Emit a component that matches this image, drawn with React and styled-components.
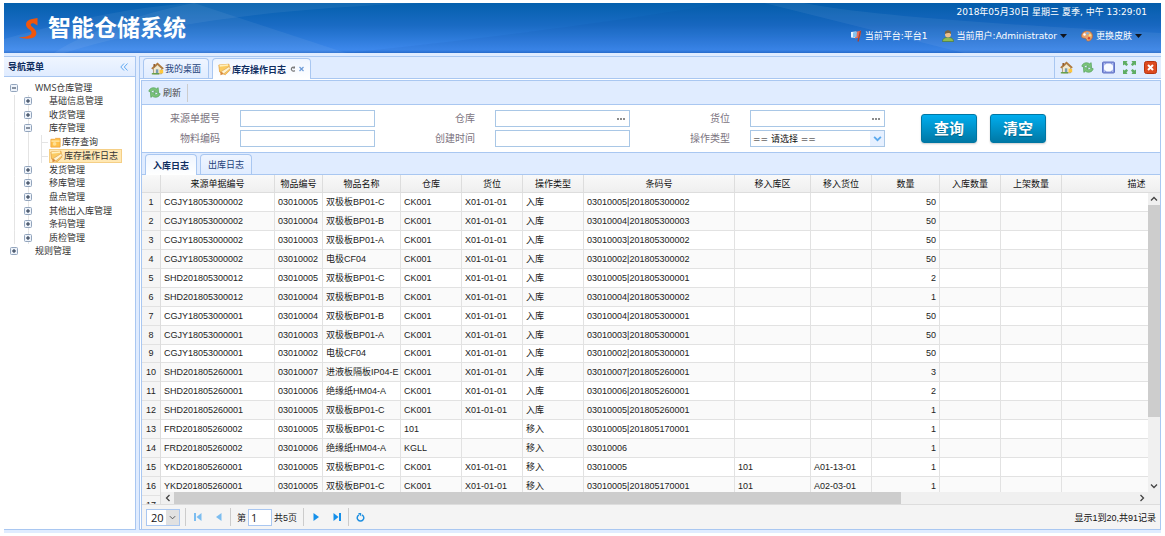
import React, { useState } from 'react';
import styled, { createGlobalStyle, css } from 'styled-components';

const GlobalStyle = createGlobalStyle`
  * {
    box-sizing: border-box;
  }

  body {
    margin: 0;
    background: #fff;
    color: #222;
    font-family: "Liberation Sans", "Noto Sans CJK SC", sans-serif;
    font-size: 9px;
  }

  button, input, select {
    font-family: inherit;
    font-size: inherit;
    color: inherit;
    margin: 0;
    padding: 0;
  }

  ul {
    list-style: none;
    margin: 0;
    padding: 0;
  }

  a {
    color: inherit;
    text-decoration: none;
  }
`;

const BORDER = '#a9c7f1';
const PANEL = '#e0ecff';

const Page = styled.div`
  height: 100vh;
  min-height: 400px;
  display: flex;
  flex-direction: column;
  padding: 3px 4px;
`;

const Header = styled.header`
  position: relative;
  display: flex;
  justify-content: space-between;
  height: 50px;
  flex: none;
  overflow: hidden;
  color: #fff;
  background: linear-gradient(#0460ad, #1a6bc4 45%, #3d88ec 94%, #2a6fd0);
`;

const Rays = styled.svg`
  position: absolute;
  inset: 0;
  width: 100%;
  height: 100%;
`;

const Brand = styled.div`
  position: relative;
  display: flex;
  align-items: center;
  gap: 10px;
  padding-left: 15px;
`;

const Title = styled.h1`
  margin: 0;
  font-size: 23px;
  line-height: 50px;
  font-weight: bold;
`;

const HeaderInfo = styled.div`
  position: relative;
  display: flex;
  flex-direction: column;
  align-items: flex-end;
  padding: 3px 14px 0 0;
  font-family: "DejaVu Sans", "Noto Sans CJK SC", sans-serif;
  line-height: 12px;
`;

const HeaderMenu = styled.nav`
  display: flex;
  align-items: center;
  gap: 14px;
  margin: 12px 5px 0 0;
`;

const HeaderItem = styled.a`
  display: flex;
  align-items: center;
  gap: 3px;
`;

const Layout = styled.div`
  flex: 1;
  min-height: 0;
  display: flex;
  gap: 3px;
  padding: 3px 0;
  background: ${PANEL};
`;

const Sidebar = styled.aside`
  width: 132px;
  flex: none;
  background: #fff;
  border: 1px solid ${BORDER};
  border-left: 0;
`;

const SidebarHead = styled.div`
  display: flex;
  align-items: center;
  justify-content: space-between;
  height: 20px;
  padding: 0 4px;
  color: #0e2d5f;
  font-weight: bold;
  background: linear-gradient(#eff5ff, #e0ecff);
  border-bottom: 1px solid ${BORDER};
`;

const Tree = styled.ul`
  display: grid;
  grid-auto-rows: 1fr;
  height: 177px;
  margin-top: 4px;
  font-family: "Open Sans", "Noto Sans CJK SC", sans-serif;
  color: #333;
`;

const guide = (x, w, h) => `linear-gradient(#e4e4e4, #e4e4e4) ${x}px center / ${w} ${h} no-repeat`;

const TreeRow = styled.li`
  display: flex;
  align-items: center;
  padding-left: ${p => p.$level === 0 ? 5 : 19}px;
  white-space: nowrap;
  ${p => p.$level === 1 && css`
    background: ${guide(10, '1px', '100%')}, ${guide(24, '1px', '100%')};
  `}
  ${p => p.$level === 2 && css`
    background: ${guide(10, '1px', '100%')}, ${guide(24, '1px', '100%')}, ${guide(37, '1px', '100%')}, ${guide(37, '7px', '1px')};
  `}
`;

const Branch = styled.button`
  display: flex;
  align-items: center;
  gap: 16px;
  border: 0;
  background: none;
  line-height: 12px;
`;

const Leaf = styled.a`
  display: flex;
  align-items: center;
  gap: 1px;
  height: 14px;
  margin-left: 26px;
  padding: 0 3px 0 0;
  line-height: 12px;
  border: 1px solid transparent;
  ${p => p.$active && css`
    background: #ffe8b4;
    border-color: #f5cf86;
  `}
`;

const Main = styled.main`
  flex: 1;
  min-width: 0;
  display: flex;
  flex-direction: column;
  background: #fff;
  border: 1px solid ${BORDER};
  border-right: 0;
`;

const TabStrip = styled.div`
  display: flex;
  align-items: flex-end;
  gap: 3px;
  flex: none;
  height: 22px;
  padding-left: 3px;
  background: ${PANEL};
  border-bottom: 1px solid ${BORDER};
`;

const Tab = styled.button`
  display: flex;
  align-items: center;
  justify-content: center;
  gap: 1px;
  height: 20px;
  padding: 0 7px;
  color: #24427a;
  white-space: nowrap;
  background: linear-gradient(#eff5ff, #e0ecff);
  border: 1px solid ${BORDER};
  border-bottom: 0;
  border-radius: 4px 4px 0 0;
  ${p => p.$active && css`
    color: #0e2d5f;
    font-weight: bold;
    height: 21px;
    margin-bottom: -1px;
    padding: 0 ${p.$tight ? 5 : 7}px;
    background: linear-gradient(#eff5ff, #fff);
  `}
`;

const StripTools = styled.div`
  display: flex;
  align-items: center;
  align-self: stretch;
  gap: 7px;
  margin-left: auto;
  padding: 0 4px;
  border-left: 1px solid ${BORDER};
`;

const IconButton = styled.button`
  display: flex;
  align-items: center;
  justify-content: center;
  width: 14px;
  height: 14px;
  border: 0;
  background: none;
`;

const Content = styled.div`
  flex: 1;
  min-height: 0;
  display: flex;
  flex-direction: column;
  margin: 1px 0 0 1px;
  border: 1px solid ${BORDER};
  border-bottom: 0;
`;

const Toolbar = styled.div`
  display: flex;
  align-items: center;
  flex: none;
  height: 24px;
  padding-left: 6px;
  background: ${PANEL};
  border-bottom: 1px solid ${BORDER};
`;

const ToolButton = styled.button`
  display: flex;
  align-items: center;
  gap: 2px;
  height: 18px;
  padding-right: 6px;
  border: 0;
  border-right: 1px solid #ccc;
  background: none;
  color: #444;
`;

const SearchForm = styled.form`
  display: flex;
  align-items: center;
  gap: 36px;
  flex: none;
  height: 48px;
  border-bottom: 1px solid ${BORDER};
`;

const Fields = styled.div`
  display: grid;
  grid-template-columns: 78px 135px 80px 135px 80px 135px;
  column-gap: 20px;
  row-gap: 3px;
`;

const Label = styled.label`
  font-size: 10px;
  line-height: 17px;
  text-align: right;
  color: #7b7380;
`;

const Field = styled.div`
  position: relative;
  display: flex;
  height: 17px;
  border: 1px solid #a9c7e6;
  background: #fff;
  font-family: "DejaVu Sans", "Noto Sans CJK SC", sans-serif;
`;

const TextInput = styled.input`
  flex: 1;
  min-width: 0;
  padding: 0 3px;
  border: 0;
  outline: 0;
  background: none;
`;

const Select = styled.select`
  flex: 1;
  min-width: 0;
  padding: 0 2px;
  border: 0;
  appearance: none;
  background: none;
  color: #111;
`;

const Arrow = styled.span`
  position: absolute;
  top: 0;
  right: 0;
  bottom: 0;
  width: ${p => p.$width}px;
  display: flex;
  align-items: center;
  justify-content: center;
  background: ${p => p.$fill};
  pointer-events: none;
`;

const PickButton = styled.button`
  display: flex;
  align-items: center;
  justify-content: center;
  width: 16px;
  border: 0;
  background: none;
`;

const Actions = styled.div`
  display: flex;
  gap: 13px;
`;

const ActionButton = styled.button`
  width: 56px;
  height: 29px;
  color: #fff;
  font-size: 15px;
  font-weight: bold;
  line-height: 20px;
  text-shadow: 0 1px 1px rgba(0, 0, 0, 0.3);
  background: linear-gradient(#00adee, #0078a5);
  border: 1px solid #0076a3;
  border-radius: 3px;
  box-shadow: 0 1px 2px rgba(0, 0, 0, 0.2);
`;

const Grid = styled.div`
  flex: 1;
  min-height: 0;
  display: flex;
`;

const Frozen = styled.div`
  width: 19px;
  flex: none;
  overflow: hidden;
  border-right: 1px solid #ddd;
  background: #f5f5f5;
`;

const Scroller = styled.div`
  flex: 1;
  min-width: 0;
  display: flex;
  flex-direction: column;
`;

const HeadClip = styled.div`
  flex: none;
  overflow: hidden;
  height: 18px;
  background: linear-gradient(#f9f9f9, #efefef);
  border-bottom: 1px solid #ddd;
`;

const BodyRow = styled.div`
  flex: 1;
  min-height: 0;
  display: flex;
`;

const BodyClip = styled.div`
  flex: 1;
  min-width: 0;
  overflow: hidden;
`;

const Table = styled.table`
  table-layout: fixed;
  border-collapse: separate;
  border-spacing: 0;
  width: ${p => p.$width}px;
`;

/* 17 rows share this height in both halves of the grid */
const BodyTable = styled(Table)`
  height: 322px;
`;

const HeadCell = styled.th`
  height: 17px;
  padding: 0;
  font-weight: normal;
  line-height: 12px;
  color: #111;
  border-right: 1px solid #ddd;
`;

const Row = styled.tr`
  height: 18px;
  background: ${p => p.$odd ? '#fafafa' : '#fff'};
`;

const Cell = styled.td`
  height: 18px;
  padding: 0 3px;
  line-height: 12px;
  white-space: nowrap;
  text-align: ${p => p.$align || 'left'};
  border-right: 1px solid #e2e2e2;
  border-bottom: 1px solid #e2e2e2;
`;

const NumberCell = styled.th`
  height: 18px;
  padding: 0;
  font-weight: normal;
  line-height: 12px;
  text-align: center;
  border-bottom: 1px solid #e2e2e2;
`;

const VScroll = styled.div`
  width: 12px;
  flex: none;
  display: flex;
  flex-direction: column;
  background: #f0f0f0;
`;

const HScroll = styled.div`
  height: 12px;
  flex: none;
  display: flex;
  align-items: center;
  padding-right: 12px;
  background: #f0f0f0;
`;

const ScrollArrow = styled.button`
  display: flex;
  align-items: center;
  justify-content: center;
  width: ${p => p.$wide ? 13 : 12}px;
  height: 12px;
  flex: none;
  border: 0;
  background: none;
`;

const Track = styled.div`
  flex: 1;
  align-self: stretch;
  min-height: 0;
`;

const Thumb = styled.div`
  background: #cdcdcd;
  ${p => p.$vertical ? css`height: 77%;` : css`width: 75.6%; height: 100%;`}
`;

const Pager = styled.div`
  display: flex;
  align-items: center;
  flex: none;
  height: 25px;
  padding: 0 4px;
  background: #f4f4f4;
  border-top: 1px solid #ddd;
`;

const PageSize = styled.div`
  position: relative;
  display: flex;
  width: 34px;
  height: 17px;
  margin-right: 4px;
  padding-left: 2px;
  border: 1px solid ${BORDER};
  background: #fff;
  font-family: "Open Sans", sans-serif;
  font-size: 11px;
`;

const Divider = styled.span`
  width: 1px;
  height: 18px;
  margin: 0 1px;
  background: #ccc;
`;

const PageButton = styled(IconButton)`
  width: 21px;
`;

const PageLabel = styled.label`
  display: flex;
  align-items: center;
  gap: 2px;
  padding: 0 5px;
`;

const PageInput = styled.input`
  width: 24px;
  height: 17px;
  padding: 0 2px;
  font-family: "Open Sans", sans-serif;
  font-size: 11px;
  border: 1px solid ${BORDER};
  outline: 0;
  background: #fff;
`;

const Summary = styled.span`
  margin-left: auto;
  color: #111;
`;

const HomeIcon = () => (
  <svg width="13" height="13" viewBox="0 0 16 16">
    <path d="M3 8v6.5h10V8L8 3.5z" fill="#f3ead0" stroke="#a08c66" />
    <path d="M1 8.5 8 2l7 6.5" fill="none" stroke="#b07a3e" strokeWidth="2.2" />
    <path d="M3 2.5h2v3H3z" fill="#8f5a2b" />
    <path d="M6 9h3v5.5H6z" fill="#7a9db4" />
    <path d="M10.5 9.500h4.500v4.500h-4.500z" fill="#ffc73b" />
    <path d="M1 14.5h9" stroke="#5e9d3c" strokeWidth="1.6" />
  </svg>
);

const EditIcon = () => (
  <svg width="13" height="13" viewBox="0 0 16 16">
    <path d="M1 2.5 13.5 1.5 14.5 9 9 14.5 2 11z" fill="#fbcb62" stroke="#e5a546" />
    <path d="M2 3.5 12.5 2.5" stroke="#fff0bd" strokeWidth="2" />
    <path d="M4 10.5 7 13.5 15.5 6.5 13.5 4.5z" fill="#fff3cf" stroke="#d9a25a" strokeWidth=".8" />
    <path d="M3 10v5l4-1.500z" fill="#d9893a" />
  </svg>
);

const QueryIcon = () => (
  <svg width="11" height="11" viewBox="0 0 12 12">
    <path d="M1 2.500h4l1-1h5v9.500H1z" fill="#ffc14a" stroke="#f0a63e" />
    <path d="M1.500 4.500h9" stroke="#ffe7a6" strokeWidth="1.500" />
    <circle cx="5" cy="7.500" r="2" fill="#ffdf93" />
  </svg>
);

const RefreshIcon = () => (
  <svg width="13" height="13" viewBox="0 0 16 16">
    <path d="M1 6.500C2 2 7.500 1 10.500 3.500L12.500 2 13 8 7 7.500 8.500 5.800C6.500 4.800 4.500 5.300 3.500 7.500z" fill="#7cc47a" stroke="#4a9c50" strokeWidth=".8" />
    <path d="M15 9.500c-1 4.500-6.500 5.500-9.500 3L3.500 14 3 8l6 .5-1.500 1.700c2 1 4 .5 5-1.700z" fill="#7cc47a" stroke="#4a9c50" strokeWidth=".8" />
  </svg>
);

const FullIcon = () => (
  <svg width="13" height="13" viewBox="0 0 13 13">
    <rect x=".5" y="1" width="12" height="11" rx="1" fill="#8596de" stroke="#6273c4" />
    <path d="M4.500 2.500h4l2.500 2v4l-2.500 2h-4L2 8.500v-4z" fill="#f7faff" />
    <path d="M2 2.500h1v1H2zM10 2.500h1v1h-1zM2 9.500h1v1H2zM10 9.500h1v1h-1z" fill="#dfe6fb" />
  </svg>
);

const ShrinkIcon = () => (
  <svg width="13" height="13" viewBox="0 0 13 13">
    <g fill="#5fad63">
      <path d="M0 0h4.500L3.500 1.500 5 3.500 3.500 5 1.500 3.500 0 4.500z" />
      <path d="M13 0v4.500L11.500 3.500 9.500 5 8 3.500l1.500-2L8.500 0z" />
      <path d="M0 13V8.500l1.500 1L3.500 8 5 9.500l-1.500 2 1 1.500z" />
      <path d="M13 13H8.500l1-1.500L8 9.500 9.500 8l2 1.500 1.500-1z" />
    </g>
  </svg>
);

const CloseIcon = () => (
  <svg width="13" height="13" viewBox="0 0 13 13">
    <rect x=".5" y=".5" width="12" height="12" rx="2" fill="#dd4a1f" stroke="#b5340f" />
    <path d="M4 4l5 5M9 4l-5 5" stroke="#fff" strokeWidth="2" />
  </svg>
);

const LogoIcon = () => (
  <svg width="19" height="21" viewBox="0 0 19 21">
    <path d="M18.500 0 13 1C8 2 6 5 7.500 8.500 9 11.500 13 12 12.500 15 12 18 6 19 0 19.500c5 1.500 12 1.800 15.500-.5C18.500 16.500 17.500 13 15 10.500 13 8.500 11 7.500 12 6c.6-1 2-1 3-.5L18.500 7.500z" fill="#f0560c" />
  </svg>
);

const FlagIcon = () => (
  <svg width="12" height="12" viewBox="0 0 12 12">
    <path d="M1 2 6 1.500V8L1 7.500z" fill="#e9f3ff" />
    <path d="M5.500 2 11 .5 10 7.500 5 8.500z" fill="#e4705c" />
    <path d="M3 2.500 7 1.500 6.500 7 3 7.500z" fill="#86c3ee" />
    <path d="M10.500 1 8 11.500" stroke="#b0402e" strokeWidth="1.300" />
  </svg>
);

const UserIcon = () => (
  <svg width="12" height="12" viewBox="0 0 12 12">
    <path d="M.5 11.500C.5 8 3.500 7.500 6 7.500s5.500.5 5.500 4z" fill="#8fbb50" stroke="#48752a" strokeWidth=".6" />
    <circle cx="6" cy="4.500" r="3" fill="#eec08e" />
    <path d="M3 4C2.500 1 4.500.3 6 .3S9.500 1 9 4C8 2.500 5 2.500 3 4z" fill="#7a6440" />
  </svg>
);

const PaletteIcon = () => (
  <svg width="12" height="12" viewBox="0 0 12 12">
    <path d="M6 1c3.500 0 5.500 2 5.500 5S9 11.500 6.500 11c-1.500-.3-.5-2-2-2.500S.5 8.500.5 6 2.500 1 6 1z" fill="#eaa36c" stroke="#b8673a" strokeWidth=".7" />
    <circle cx="3.500" cy="4.500" r="1.200" fill="#fff" />
    <circle cx="6.500" cy="3.300" r="1.200" fill="#78b3e6" />
    <circle cx="9" cy="5.300" r="1.200" fill="#f8e27a" />
    <circle cx="8" cy="8.300" r="1.200" fill="#d4472f" />
  </svg>
);

const CaretIcon = () => (
  <svg width="7" height="4" viewBox="0 0 7 4">
    <path d="M0 0h7L3.500 4z" fill="#10151f" />
  </svg>
);

const ToggleIcon = ({ open }) => (
  <svg width="10" height="8" viewBox="0 0 10 8">
    <rect x="1.500" y=".5" width="7" height="7" rx="1" fill="#eef3fa" stroke="#93a5bd" />
    <path d="M3 4h4" stroke="#1f2f47" />
    {!open && <path d="M5 2v4" stroke="#1f2f47" />}
  </svg>
);

const DotsIcon = () => (
  <svg width="8" height="2" viewBox="0 0 8 2">
    <path d="M0 0h2v2H0zM3 0h2v2H3zM6 0h2v2H6z" fill="#8c8c8c" />
  </svg>
);

const CHEVRONS = {
  up: 'M1 5.500 4 2.500 7 5.500',
  down: 'M1 2.500 4 5.500 7 2.500',
  left: 'M5.500 1 2.500 4 5.500 7',
  right: 'M2.500 1 5.500 4 2.500 7',
};

const Chevron = ({ to, color = '#444', size = 8, weight = 1.3 }) => (
  <svg width={size} height={size} viewBox="0 0 8 8">
    <path d={CHEVRONS[to]} fill="none" stroke={color} strokeWidth={weight} />
  </svg>
);

const CollapseIcon = () => (
  <svg width="8" height="8" viewBox="0 0 8 8">
    <path d="M4 .5.800 4 4 7.500M7.500.5 4.300 4l3.200 3.500" fill="none" stroke="#5fa8f0" />
  </svg>
);

const PageIcon = ({ d, color }) => (
  <svg width="8" height="8" viewBox="0 0 8 8">
    <path d={d} fill={color} />
  </svg>
);

const ReloadIcon = () => (
  <svg width="9" height="9" viewBox="0 0 9 9">
    <path d="M6 1.800a3.300 3.300 0 1 1-3 0" fill="none" stroke="#1e8fe0" strokeWidth="1.500" />
    <path d="M2 0h3.200v3.500z" fill="#1e8fe0" />
  </svg>
);

const TabMarks = () => (
  <svg width="18" height="8" viewBox="0 0 18 8">
    <path d="M7.500 2.500a2 2 0 1 0 .3 3" fill="none" stroke="#777" strokeWidth="1.200" />
    <path d="M5.500 3.500H8V1z" fill="#777" />
    <path d="M12.500 2l4 4M16.500 2l-4 4" stroke="#6d9bd8" strokeWidth="1.200" />
  </svg>
);

const menu = [
  { text: 'WMS仓库管理', level: 0, open: true },
  { text: '基础信息管理', level: 1 },
  { text: '收货管理', level: 1 },
  { text: '库存管理', level: 1, open: true },
  { text: '库存查询', level: 2, icon: <QueryIcon /> },
  { text: '库存操作日志', level: 2, icon: <EditIcon />, active: true },
  { text: '发货管理', level: 1 },
  { text: '移库管理', level: 1 },
  { text: '盘点管理', level: 1 },
  { text: '其他出入库管理', level: 1 },
  { text: '条码管理', level: 1 },
  { text: '质检管理', level: 1 },
  { text: '规则管理', level: 0 },
];

const columns = [
  { title: '来源单据编号', width: 114 },
  { title: '物品编号', width: 48 },
  { title: '物品名称', width: 78 },
  { title: '仓库', width: 61 },
  { title: '货位', width: 61 },
  { title: '操作类型', width: 61 },
  { title: '条码号', width: 151 },
  { title: '移入库区', width: 76 },
  { title: '移入货位', width: 61 },
  { title: '数量', width: 68, align: 'right' },
  { title: '入库数量', width: 61 },
  { title: '上架数量', width: 61 },
  { title: '描述', width: 150 },
];

const tableWidth = columns.reduce((sum, c) => sum + c.width, 0);

const rows = [
  ['CGJY18053000002', '03010005', '双极板BP01-C', 'CK001', 'X01-01-01', '入库', '03010005|201805300002', '', '', '50'],
  ['CGJY18053000002', '03010004', '双极板BP01-B', 'CK001', 'X01-01-01', '入库', '03010004|201805300003', '', '', '50'],
  ['CGJY18053000002', '03010003', '双极板BP01-A', 'CK001', 'X01-01-01', '入库', '03010003|201805300002', '', '', '50'],
  ['CGJY18053000002', '03010002', '电极CF04', 'CK001', 'X01-01-01', '入库', '03010002|201805300002', '', '', '50'],
  ['SHD201805300012', '03010005', '双极板BP01-C', 'CK001', 'X01-01-01', '入库', '03010005|201805300001', '', '', '2'],
  ['SHD201805300012', '03010004', '双极板BP01-B', 'CK001', 'X01-01-01', '入库', '03010004|201805300002', '', '', '1'],
  ['CGJY18053000001', '03010004', '双极板BP01-B', 'CK001', 'X01-01-01', '入库', '03010004|201805300001', '', '', '50'],
  ['CGJY18053000001', '03010003', '双极板BP01-A', 'CK001', 'X01-01-01', '入库', '03010003|201805300001', '', '', '50'],
  ['CGJY18053000001', '03010002', '电极CF04', 'CK001', 'X01-01-01', '入库', '03010002|201805300001', '', '', '50'],
  ['SHD201805260001', '03010007', '进液板隔板IP04-E', 'CK001', 'X01-01-01', '入库', '03010007|201805260001', '', '', '3'],
  ['SHD201805260001', '03010006', '绝缘纸HM04-A', 'CK001', 'X01-01-01', '入库', '03010006|201805260001', '', '', '2'],
  ['SHD201805260001', '03010005', '双极板BP01-C', 'CK001', 'X01-01-01', '入库', '03010005|201805260001', '', '', '1'],
  ['FRD201805260002', '03010005', '双极板BP01-C', '101', '', '移入', '03010005|201805170001', '', '', '1'],
  ['FRD201805260002', '03010006', '绝缘纸HM04-A', 'KGLL', '', '移入', '03010006', '', '', '1'],
  ['YKD201805260001', '03010005', '双极板BP01-C', 'CK001', 'X01-01-01', '移入', '03010005', '101', 'A01-13-01', '1'],
  ['YKD201805260001', '03010005', '双极板BP01-C', 'CK001', 'X01-01-01', '移入', '03010005|201805170001', '101', 'A02-03-01', '1'],
  [],
];

const Columns = () => (
  <colgroup>
    {columns.map(c => <col key={c.title} style={{ width: c.width }} />)}
  </colgroup>
);

const TopBar = () => (
  <Header>
    <Rays viewBox="0 0 1157 50" preserveAspectRatio="none">
      <path d="M60 50C150 22 260 6 420 0H190C130 12 80 30 50 50z" fill="#fff" opacity=".06" />
      <path d="M190 0 342 50H0V36C80 14 130 4 190 0z" fill="#fff" opacity=".06" />
      <path d="M342 50C500 34 640 14 720 0h437v50z" fill="#003a8c" opacity=".06" />
      <path d="M760 0 960 50h197V30C1000 22 860 12 800 0z" fill="#fff" opacity=".06" />
    </Rays>
    <Brand>
      <LogoIcon />
      <Title>智能仓储系统</Title>
    </Brand>
    <HeaderInfo>
      <time>2018年05月30日 星期三 夏季, 中午 13:29:01</time>
      <HeaderMenu>
        <HeaderItem href="#platform"><FlagIcon />当前平台:平台1</HeaderItem>
        <HeaderItem href="#user"><UserIcon />当前用户:Administrator <CaretIcon /></HeaderItem>
        <HeaderItem href="#skin"><PaletteIcon />更换皮肤 <CaretIcon /></HeaderItem>
      </HeaderMenu>
    </HeaderInfo>
  </Header>
);

const SideMenu = () => (
  <Sidebar>
    <SidebarHead>
      导航菜单
      <IconButton aria-label="collapse"><CollapseIcon /></IconButton>
    </SidebarHead>
    <Tree>
      {menu.map(item => (
        <TreeRow key={item.text} $level={item.level}>
          {item.level === 2
            ? <Leaf href="#log" $active={item.active}>{item.icon}{item.text}</Leaf>
            : <Branch><ToggleIcon open={item.open} />{item.text}</Branch>}
        </TreeRow>
      ))}
    </Tree>
  </Sidebar>
);

const Search = () => (
  <SearchForm onSubmit={e => e.preventDefault()}>
    <Fields>
      <Label htmlFor="source">来源单据号</Label>
      <Field><TextInput id="source" /></Field>
      <Label htmlFor="store">仓库</Label>
      <Field>
        <TextInput id="store" />
        <PickButton type="button" aria-label="pick"><DotsIcon /></PickButton>
      </Field>
      <Label htmlFor="place">货位</Label>
      <Field>
        <TextInput id="place" />
        <PickButton type="button" aria-label="pick"><DotsIcon /></PickButton>
      </Field>
      <Label htmlFor="material">物料编码</Label>
      <Field><TextInput id="material" /></Field>
      <Label htmlFor="created">创建时间</Label>
      <Field><TextInput id="created" /></Field>
      <Label htmlFor="type">操作类型</Label>
      <Field>
        <Select id="type"><option>== 请选择 ==</option></Select>
        <Arrow $width={14} $fill="#e6f0ff"><Chevron to="down" color="#5aa9ee" size={9} weight={1.6} /></Arrow>
      </Field>
    </Fields>
    <Actions>
      <ActionButton type="submit">查询</ActionButton>
      <ActionButton type="reset">清空</ActionButton>
    </Actions>
  </SearchForm>
);

const LogGrid = () => (
  <Grid>
    <Frozen>
      <HeadClip />
      <BodyTable $width={18}>
        <tbody>
          {rows.map((row, i) => (
            <tr key={i}><NumberCell>{i + 1}</NumberCell></tr>
          ))}
        </tbody>
      </BodyTable>
    </Frozen>
    <Scroller>
      <HeadClip>
        <Table $width={tableWidth}>
          <Columns />
          <thead>
            <tr>{columns.map(c => <HeadCell key={c.title}>{c.title}</HeadCell>)}</tr>
          </thead>
        </Table>
      </HeadClip>
      <BodyRow>
        <BodyClip>
          <BodyTable $width={tableWidth}>
            <Columns />
            <tbody>
              {rows.map((row, i) => (
                <Row key={i} $odd={i % 2 === 1}>
                  {columns.map((c, j) => <Cell key={c.title} $align={c.align}>{row[j]}</Cell>)}
                </Row>
              ))}
            </tbody>
          </BodyTable>
        </BodyClip>
        <VScroll>
          <ScrollArrow aria-label="up"><Chevron to="up" /></ScrollArrow>
          <Track><Thumb $vertical /></Track>
          <ScrollArrow aria-label="down"><Chevron to="down" /></ScrollArrow>
        </VScroll>
      </BodyRow>
      <HScroll>
        <ScrollArrow $wide aria-label="left"><Chevron to="left" /></ScrollArrow>
        <Track><Thumb /></Track>
        <ScrollArrow $wide aria-label="right"><Chevron to="right" /></ScrollArrow>
      </HScroll>
    </Scroller>
  </Grid>
);

const PagerBar = () => {
  const [page, setPage] = useState('1');

  return (
    <Pager>
      <PageSize>
        <Select aria-label="page size"><option>20</option></Select>
        <Arrow $width={13} $fill="#e1e1e1"><Chevron to="down" size={7} weight={1} /></Arrow>
      </PageSize>
      <Divider />
      <PageButton aria-label="first"><PageIcon color="#7cbdf0" d="M0 0h2v8H0zM7.500 0v8L2.500 4z" /></PageButton>
      <PageButton aria-label="previous"><PageIcon color="#7cbdf0" d="M6.500 0v8L1 4z" /></PageButton>
      <Divider />
      <PageLabel>
        第
        <PageInput value={page} onChange={e => setPage(e.target.value)} />
        共5页
      </PageLabel>
      <Divider />
      <PageButton aria-label="next"><PageIcon color="#1590ea" d="M1.500 0v8L7 4z" /></PageButton>
      <PageButton aria-label="last"><PageIcon color="#1590ea" d="M6 0h2v8H6zM.5 0v8l5-4z" /></PageButton>
      <Divider />
      <PageButton aria-label="reload"><ReloadIcon /></PageButton>
      <Summary>显示1到20,共91记录</Summary>
    </Pager>
  );
};

export default function App() {
  return (
    <Page>
      <GlobalStyle />
      <TopBar />
      <Layout>
        <SideMenu />
        <Main>
          <TabStrip>
            <Tab><HomeIcon />我的桌面</Tab>
            <Tab $active $tight><EditIcon />库存操作日志<TabMarks /></Tab>
            <StripTools>
              <IconButton aria-label="home"><HomeIcon /></IconButton>
              <IconButton aria-label="refresh"><RefreshIcon /></IconButton>
              <IconButton aria-label="full screen"><FullIcon /></IconButton>
              <IconButton aria-label="shrink"><ShrinkIcon /></IconButton>
              <IconButton aria-label="close"><CloseIcon /></IconButton>
            </StripTools>
          </TabStrip>
          <Content>
            <Toolbar>
              <ToolButton><RefreshIcon />刷新</ToolButton>
            </Toolbar>
            <Search />
            <TabStrip>
              <Tab $active>入库日志</Tab>
              <Tab>出库日志</Tab>
            </TabStrip>
            <LogGrid />
            <PagerBar />
          </Content>
        </Main>
      </Layout>
    </Page>
  );
}
